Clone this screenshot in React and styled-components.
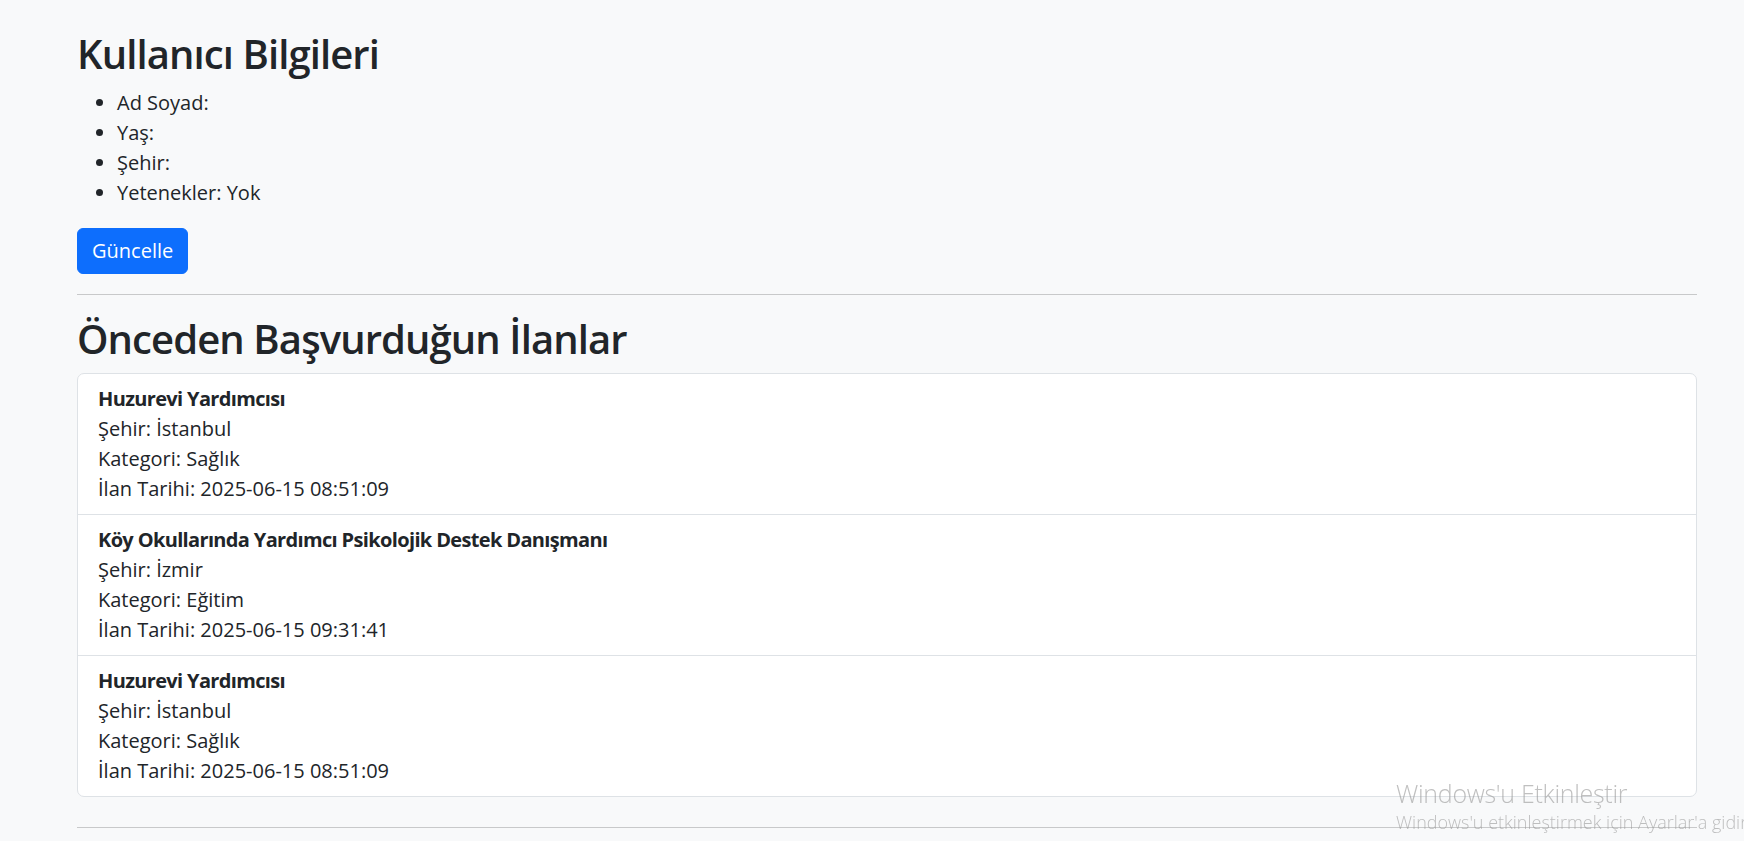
import React from "react";
import styled, { createGlobalStyle } from "styled-components";

const GlobalStyle = createGlobalStyle`
  body {
    margin: 0;
    background-color: #f8f9fa;
    color: #212529;
    font-family: "Open Sans", "Noto Sans", sans-serif;
    font-size: 20px;
    line-height: 30px;
  }
`;

const Container = styled.div`
  padding: 30px 47px 0 77px;
`;

const Heading = styled.h2`
  font-size: 40px;
  font-weight: 600;
  line-height: 48px;
  letter-spacing: -0.9px;
  margin: 0 0 10px;
`;

const InfoList = styled.ul`
  margin: 0 0 20px;
  padding-left: 40px;
`;

const Button = styled.button`
  display: inline-block;
  height: 46px;
  padding: 0 14px;
  font-family: inherit;
  font-size: 20px;
  line-height: 30px;
  color: #fff;
  background-color: #0d6efd;
  border: 1px solid #0d6efd;
  border-radius: 6px;
  cursor: pointer;
`;

const Divider = styled.hr`
  margin: 20px 0;
  border: 0;
  border-top: 1px solid #c8c9ca;
`;

const ListGroup = styled.div`
  background-color: #fff;
  border: 1px solid #dee2e6;
  border-radius: 7px;
  margin-bottom: 30px;
`;

const ListItem = styled.div`
  padding: 10px 20px;
  border-top: ${props => (props.$first ? "none" : "1px solid #dee2e6")};
`;

const Title = styled.strong`
  display: block;
  font-weight: 700;
  letter-spacing: -0.65px;
`;

const Line = styled.div``;

const Watermark = styled.div`
  position: fixed;
  left: 1396px;
  top: 777px;
  color: rgba(150, 150, 150, 0.6);
  white-space: nowrap;
  pointer-events: none;
`;

const WatermarkTitle = styled.div`
  font-size: 25px;
  font-weight: 300;
  line-height: 32px;
  letter-spacing: -0.3px;
`;

const WatermarkText = styled.div`
  font-size: 18px;
  font-weight: 300;
  line-height: 26px;
`;

const ilanlar = [
  { baslik: "Huzurevi Yardımcısı", sehir: "İstanbul", kategori: "Sağlık", tarih: "2025-06-15 08:51:09" },
  { baslik: "Köy Okullarında Yardımcı Psikolojik Destek Danışmanı", sehir: "İzmir", kategori: "Eğitim", tarih: "2025-06-15 09:31:41" },
  { baslik: "Huzurevi Yardımcısı", sehir: "İstanbul", kategori: "Sağlık", tarih: "2025-06-15 08:51:09" },
];

export default function App() {
  return (
    <>
      <GlobalStyle />
      <Container>
        <Heading>Kullanıcı Bilgileri</Heading>
        <InfoList>
          <li>Ad Soyad: </li>
          <li>Yaş: </li>
          <li>Şehir: </li>
          <li>Yetenekler: Yok</li>
        </InfoList>
        <Button>Güncelle</Button>
        <Divider />
        <Heading>Önceden Başvurduğun İlanlar</Heading>
        <ListGroup>
          {ilanlar.map((ilan, i) => (
            <ListItem key={i} $first={i === 0}>
              <Title>{ilan.baslik}</Title>
              <Line>Şehir: {ilan.sehir}</Line>
              <Line>Kategori: {ilan.kategori}</Line>
              <Line>İlan Tarihi: {ilan.tarih}</Line>
            </ListItem>
          ))}
        </ListGroup>
        <Divider />
      </Container>
      <Watermark>
        <WatermarkTitle>Windows'u Etkinleştir</WatermarkTitle>
        <WatermarkText>Windows'u etkinleştirmek için Ayarlar'a gidin</WatermarkText>
      </Watermark>
    </>
  );
}
